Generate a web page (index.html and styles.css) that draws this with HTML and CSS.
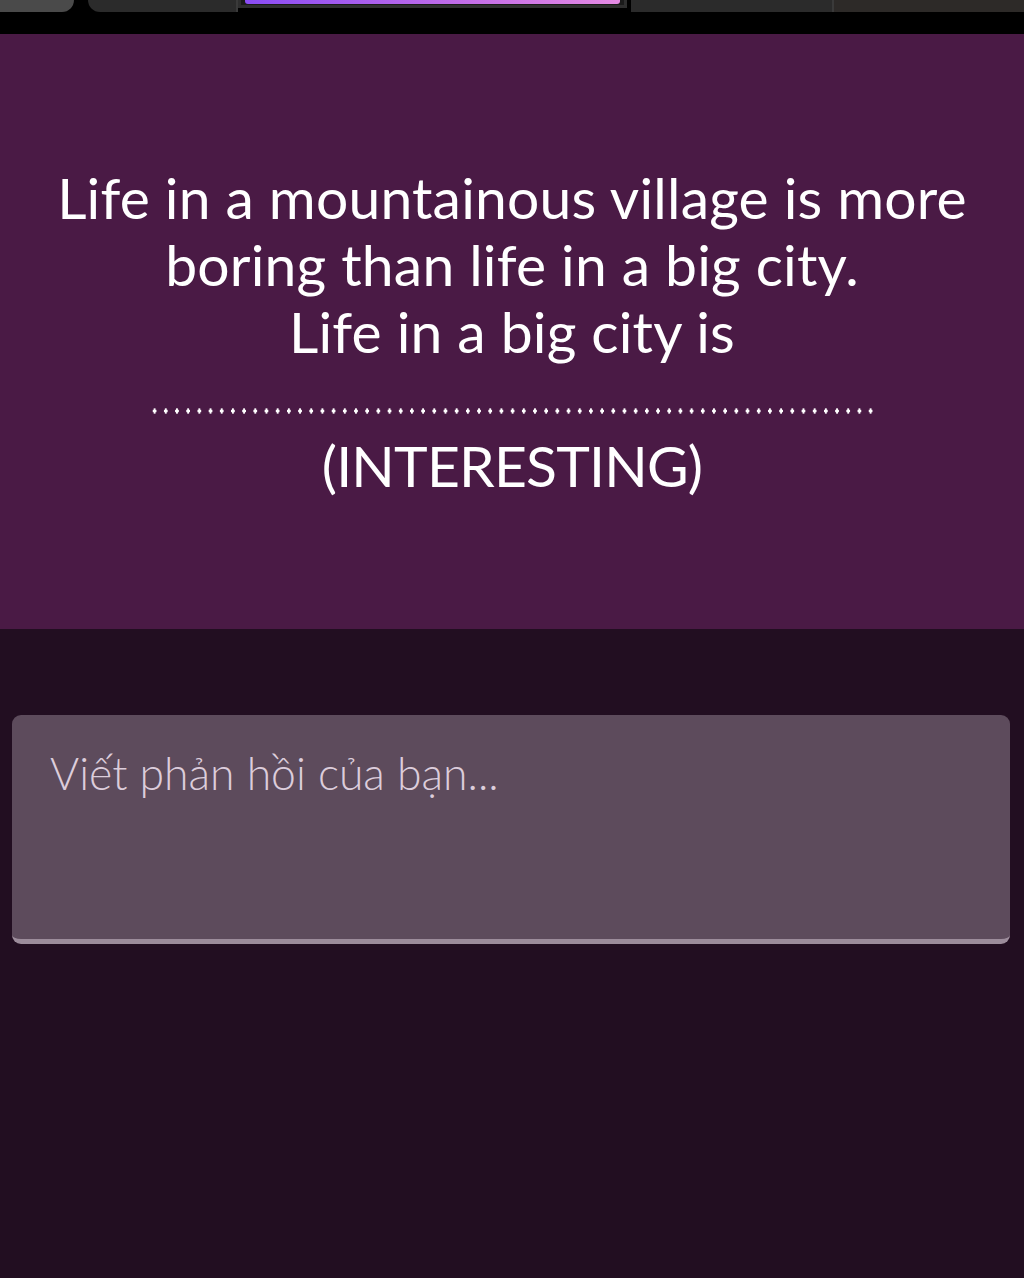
FILE: index.html
```html
<!DOCTYPE html>
<html lang="vi">
<head>
    <meta charset="UTF-8">
    <title>Câu hỏi</title>
    <link rel="stylesheet" href="styles.css">
</head>
<body>
    <div class="topbar">
        <div class="tab tab-first"></div>
        <div class="tab tab-second"></div>
        <div class="tab tab-active"><div class="progress"></div></div>
        <div class="tab tab-fourth"></div>
        <div class="tab tab-last"></div>
    </div>
    <div class="question">
        <p class="question-text">Life in a mountainous village is more boring than life in a big city.<br>Life in a big city is</p>
        <div class="blank"></div>
        <p class="question-text hint">(INTERESTING)</p>
    </div>
    <div class="answer">
        <textarea class="reply" placeholder="Viết phản hồi của bạn..."></textarea>
    </div>
</body>
</html>
```

FILE: styles.css
```css
* { box-sizing: border-box; }
html, body { margin: 0; height: 100%; }
body { font-family: Lato, "Noto Sans", sans-serif; background: #220e21; display: flex; flex-direction: column; }

.topbar { height: 34px; background: #000; display: flex; align-items: flex-start; flex-shrink: 0; }
.tab { height: 12px; background: #2b2b2b; }
.tab-first { width: 74px; background: #4a4a4a; border-bottom-right-radius: 14px; margin-right: 14px; }
.tab-second { width: 150px; border-bottom-left-radius: 14px; border-right: 2px solid #3a3a3a; }
.tab-active { width: 389px; background: #1a1a1a; border: 3px solid #2e2e2e; border-top: none; padding: 0 4px; height: 8px; }
.progress { height: 4px; border-radius: 0 0 3px 3px; background: linear-gradient(90deg, #8a4cf5, #c46ee8 60%, #e58ae4); }
.tab-fourth { width: 203px; margin-left: 4px; border-right: 2px solid #3a3a3a; }
.tab-last { flex: 1; background: #2d2a28; }

.question { background: #4a1a45; padding: 130px 30px 130px; text-align: center; color: #fff; flex-shrink: 0; }
.question-text { margin: 0 auto; max-width: 960px; font-size: 57px; line-height: 67px; letter-spacing: 0.2px; }
.hint { letter-spacing: -0.8px; }
.blank { width: 727px; height: 6px; margin: 43px auto 18px; background-image: radial-gradient(ellipse 1.7px 2.8px at center, #fff 90%, transparent 100%); background-size: 11.2px 6px; background-repeat: repeat-x; }

.answer { padding: 86px 14px 0 12px; }
.reply { display: block; width: 100%; height: 229px; padding: 31px 38px; background: #5d4b5c; border: none; border-bottom: 5px solid #9c8c9b; border-radius: 9px; font-family: Lato, "Noto Sans", sans-serif; font-size: 44.5px; font-weight: 300; color: #fff; resize: none; outline: none; }
.reply::placeholder { color: #dccddb; }
```
